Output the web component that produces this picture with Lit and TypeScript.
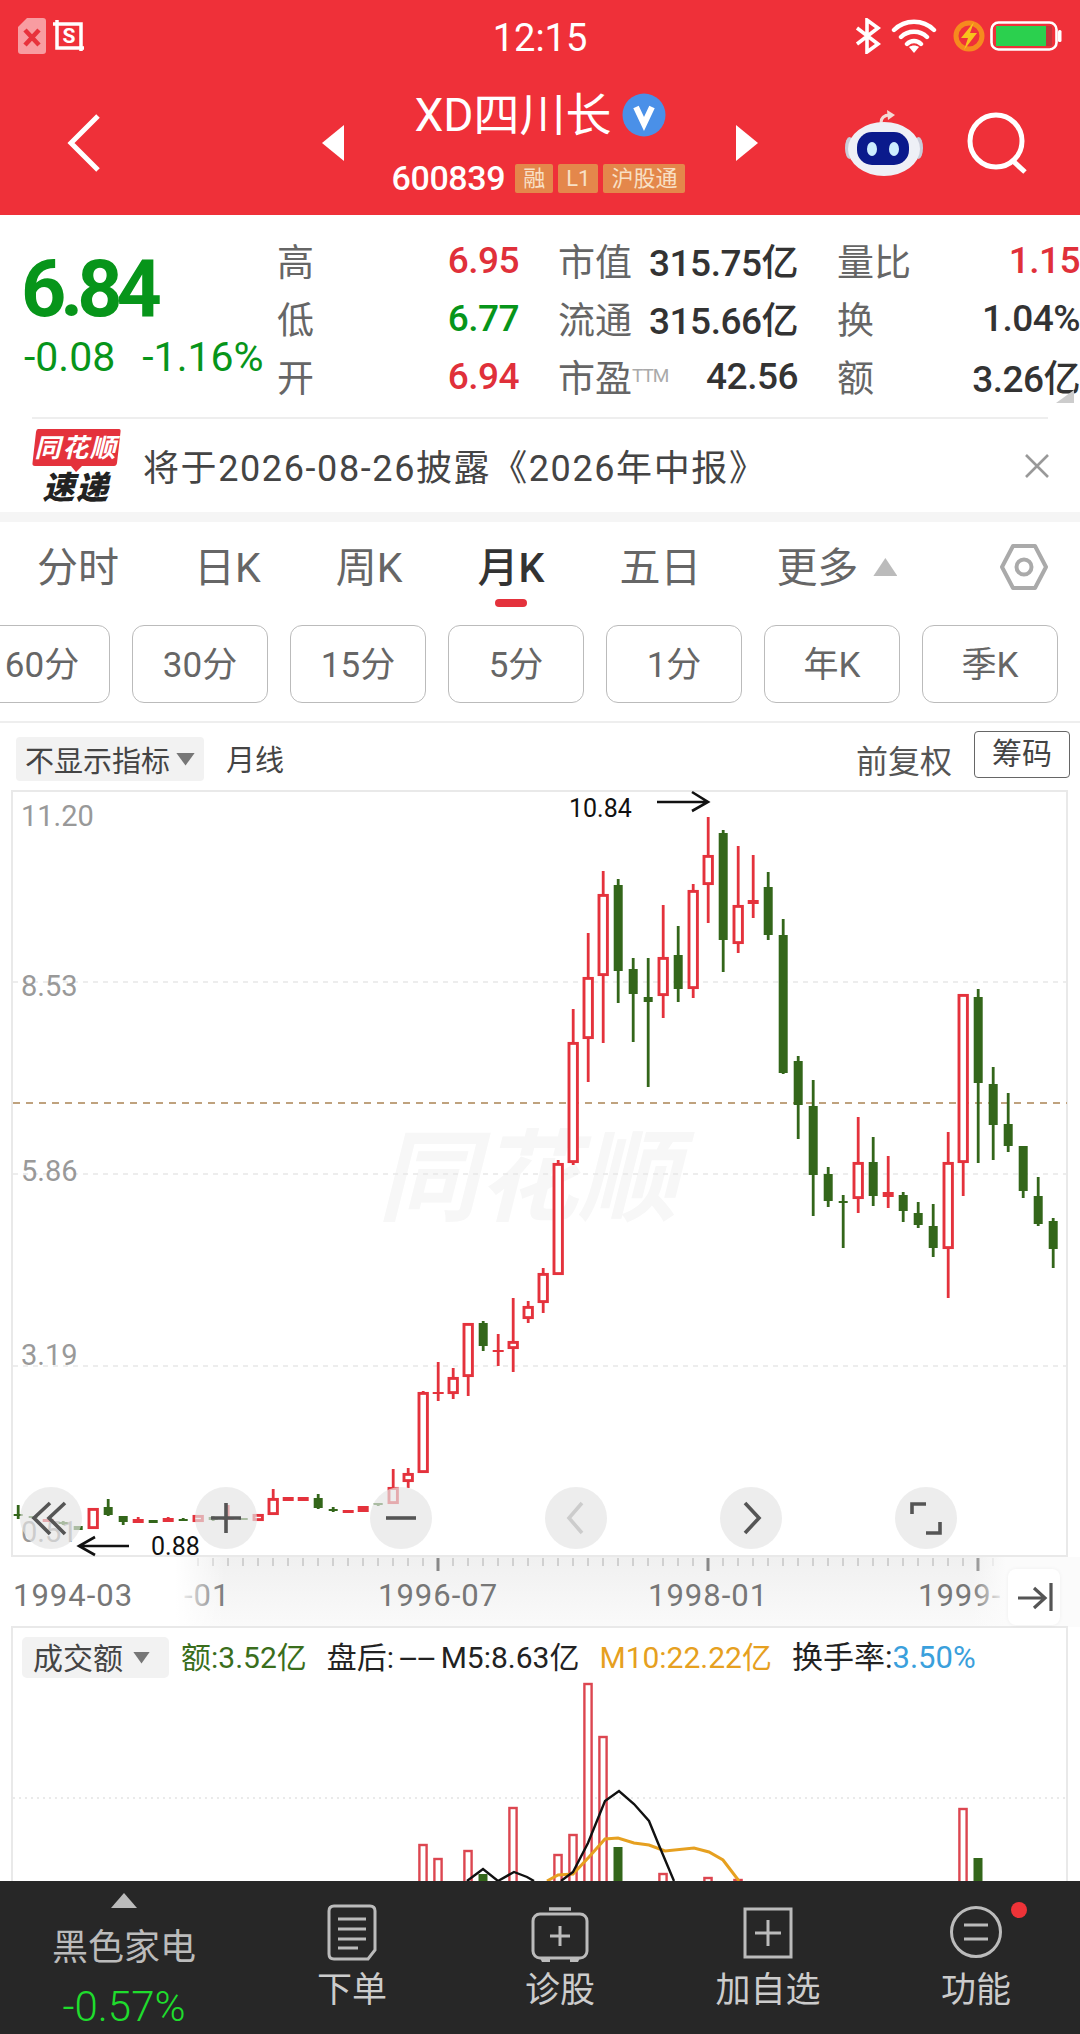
import { LitElement, css, html, svg } from "lit";
import { customElement } from "lit/decorators.js";

// [up, high, bodyTop, bodyBottom, low]
type Candle = [number, number, number, number, number];

const CANDLES: Candle[] = [
  [0, 1505, 1514, 1516, 1519], [0, 1516, 1516, 1518, 1519], [1, 1519, 1519, 1522, 1522], [0, 1521, 1522, 1524, 1525],
  [0, 1526, 1526, 1530, 1530], [1, 1508, 1508, 1529, 1529], [0, 1499, 1507, 1515, 1516], [0, 1516, 1516, 1522, 1525],
  [1, 1517, 1519, 1523, 1523], [0, 1520, 1520, 1523, 1523], [1, 1517, 1518, 1522, 1522], [0, 1518, 1519, 1521, 1521],
  [1, 1515, 1515, 1522, 1522], [0, 1516, 1517, 1520, 1521], [1, 1505, 1517, 1520, 1520], [0, 1518, 1518, 1520, 1520],
  [1, 1514, 1514, 1521, 1521], [1, 1489, 1498, 1515, 1515], [1, 1497, 1497, 1501, 1501], [1, 1497, 1497, 1501, 1501],
  [0, 1494, 1498, 1508, 1509], [0, 1507, 1509, 1511, 1512], [1, 1510, 1510, 1513, 1513], [1, 1506, 1506, 1512, 1512],
  [0, 1503, 1503, 1505, 1506], [1, 1469, 1487, 1504, 1504], [1, 1468, 1473, 1482, 1488], [1, 1391, 1392, 1473, 1473],
  [1, 1362, 1392, 1394, 1401], [1, 1368, 1377, 1394, 1399], [1, 1323, 1323, 1377, 1396], [0, 1321, 1323, 1346, 1351],
  [1, 1334, 1350, 1352, 1366], [1, 1298, 1341, 1349, 1372], [1, 1301, 1306, 1319, 1323], [1, 1268, 1273, 1303, 1313],
  [1, 1160, 1163, 1275, 1275], [1, 1009, 1042, 1163, 1165], [1, 933, 977, 1039, 1082], [1, 871, 894, 976, 1043],
  [0, 879, 885, 971, 1003], [0, 958, 969, 994, 1042], [0, 958, 997, 1002, 1087], [1, 905, 957, 996, 1018],
  [0, 926, 955, 989, 1002], [1, 884, 890, 989, 998], [1, 817, 855, 885, 923], [0, 830, 833, 940, 972],
  [1, 846, 905, 944, 953], [1, 855, 900, 904, 918], [0, 872, 887, 935, 940], [0, 919, 935, 1073, 1074],
  [0, 1056, 1061, 1105, 1139], [0, 1080, 1106, 1175, 1216], [0, 1167, 1174, 1201, 1207], [0, 1195, 1201, 1203, 1248],
  [1, 1117, 1162, 1199, 1213], [0, 1137, 1162, 1196, 1206], [1, 1156, 1192, 1197, 1208], [0, 1192, 1195, 1211, 1222],
  [0, 1202, 1213, 1225, 1228], [0, 1204, 1226, 1248, 1257], [1, 1132, 1162, 1249, 1298], [1, 994, 994, 1163, 1196],
  [0, 989, 997, 1083, 1163], [0, 1067, 1084, 1125, 1160], [0, 1093, 1124, 1146, 1152], [0, 1146, 1146, 1191, 1198],
  [0, 1177, 1196, 1224, 1226], [0, 1218, 1221, 1249, 1268],
];

// [up, x, top]
const VOLUMES: [number, number, number][] = [
  [1, 423, 1844], [1, 438, 1858], [1, 468, 1850], [0, 483, 1874], [1, 513, 1807], [1, 558, 1854], [1, 573, 1834],
  [1, 588, 1683], [1, 603, 1736], [0, 618, 1847], [1, 663, 1873], [1, 708, 1877], [1, 738, 1879], [1, 963, 1808],
  [0, 978, 1858],
];

const MA5_A = "467,1881 483,1869 498,1881 514,1872 527,1877 534,1881";
const MA5_B = "561,1881 573,1872 588,1843 605,1801 619,1791 634,1804 649,1821 658,1843 674,1881";
const MA10 = "547,1881 558,1875 573,1874 589,1857 605,1839 618,1838 634,1843 649,1845 665,1851 694,1848 709,1852 723,1860 739,1881";

const CHIPS = ["60分", "30分", "15分", "5分", "1分", "年K", "季K"];
const TABS = ["分时", "日K", "周K", "月K", "五日", "更多"];
const AXIS_X = Array.from({ length: 55 }, (_, i) => 198 + i * 15);

const candleX = (i: number) => 18.2 + i * 15;

function renderCandle(c: Candle, i: number) {
  const [up, high, top, bottom, low] = c;
  const x = candleX(i);
  const color = up ? "#e4323c" : "#33661a";
  const thin = bottom - top < 7;
  const wick = svg`<line x1=${x} x2=${x} y1=${high} y2=${low} stroke=${color} stroke-width="2.8"></line>`;
  if (!up || thin) {
    const w = up ? 11 : 9;
    return svg`${wick}<rect x=${x - w / 2} y=${top} width=${w} height=${bottom - top} fill=${color}></rect>`;
  }
  return svg`${wick}<rect x=${x - 4.2} y=${top + 1.4} width="8.4" height=${bottom - top - 2.8} fill="#fff" stroke=${color} stroke-width="2.9"></rect>`;
}

function renderVolume(v: [number, number, number]) {
  const [up, x, top] = v;
  return up
    ? svg`<rect x=${x - 3.6} y=${top + 1} width="7.2" height=${1890 - top} fill="#fff" stroke="#dc4650" stroke-width="2.4"></rect>`
    : svg`<rect x=${x - 4.5} y=${top} width="9" height=${1890 - top} fill="#33661a"></rect>`;
}

@customElement("app-root")
export class AppRoot extends LitElement {
  static styles = css`
    :host {
      display: block;
      height: 100vh;
      font-family: Roboto, "Noto Sans CJK SC", sans-serif;
      color: #333;
      background: #fff;
      overflow: hidden;
    }
    .page {
      display: flex;
      flex-direction: column;
      height: 100%;
    }
    .top {
      height: 215px;
      flex: none;
      background: #ef3039;
      color: #fff;
      display: flex;
      flex-direction: column;
    }
    .status {
      height: 56px;
      display: grid;
      grid-template-columns: 1fr auto 1fr;
      align-items: center;
      padding: 14px 18px 0;
      box-sizing: border-box;
    }
    .status-left {
      display: flex;
      gap: 7px;
      align-items: center;
    }
    .status-right {
      display: flex;
      gap: 5px;
      align-items: center;
      justify-content: flex-end;
    }
    .status-right .wifi {
      margin: 0 11px 0 4px;
    }
    .time {
      font-size: 38px;
      line-height: 40px;
      margin-top: 4px;
    }
    .nav {
      flex: 1;
      display: grid;
      grid-template-columns: 1fr 436px 1fr;
      align-items: center;
      padding-top: 14px;
    }
    .back {
      padding-left: 66px;
      display: flex;
    }
    .centre {
      display: flex;
      justify-content: space-between;
      align-items: center;
    }
    .stock {
      display: flex;
      flex-direction: column;
      align-items: center;
    }
    .title {
      display: flex;
      align-items: center;
      gap: 10px;
      font-size: 46px;
      line-height: 52px;
    }
    .code-row {
      display: flex;
      align-items: center;
      margin: 19px 0 0 2px;
    }
    .code {
      font-size: 34px;
      line-height: 36px;
      font-weight: 500;
      letter-spacing: -0.4px;
      margin-right: 10px;
    }
    .tag {
      height: 29px;
      line-height: 29px;
      padding: 0 8px;
      margin-right: 5px;
      border-radius: 2px;
      background: #e4874b;
      color: #f8e0c6;
      font-size: 22px;
    }
    .nav-right {
      display: flex;
      align-items: center;
      justify-content: flex-end;
      gap: 44px;
      padding-right: 51px;
    }
    .quote {
      position: relative;
      flex: none;
      height: 202px;
      box-sizing: border-box;
      padding: 16px 0 0 23px;
      display: grid;
      grid-template-columns: 254px 242px 240px 241px;
      grid-template-rows: 58px 58px 58px;
    }
    .quote::after {
      content: "";
      position: absolute;
      right: 6px;
      top: 175px;
      width: 18px;
      height: 13px;
      background: #ccc;
      clip-path: polygon(100% 0, 100% 100%, 0 100%);
    }
    .price {
      grid-row: 1 / span 3;
      color: #07951a;
    }
    .price-main {
      font-size: 79px;
      line-height: 80px;
      font-weight: 700;
      letter-spacing: -6px;
      margin: 18px 0 0 -2px;
    }
    .price-sub {
      display: flex;
      gap: 27px;
      font-size: 41px;
      line-height: 44px;
      margin: 6px 0 0 1px;
      white-space: nowrap;
    }
    .cell {
      display: flex;
      justify-content: space-between;
      align-items: center;
      font-size: 37px;
      white-space: nowrap;
      font-weight: 500;
      letter-spacing: -0.5px;
    }
    .cell.c2 {
      margin-left: 39px;
      width: 240px;
    }
    .cell.c3 {
      margin-left: 78px;
      width: 243px;
    }
    .cell .label {
      color: #666;
      font-weight: 400;
      font-size: 37px;
      letter-spacing: 0;
    }
    .cell sup {
      font-size: 19px;
      color: #aaa;
      font-weight: 400;
      vertical-align: 10px;
      line-height: 0;
      letter-spacing: -1px;
    }
    .red {
      color: #e0303a;
    }
    .green {
      color: #07951a;
    }
    .news {
      flex: none;
      height: 95px;
      margin: 0 32px;
      border-top: 2px solid #eee;
      box-sizing: border-box;
      display: flex;
      align-items: center;
      font-size: 36px;
      letter-spacing: 1.6px;
      color: #444;
    }
    .news-text {
      margin: -2px 0 0 22px;
      white-space: nowrap;
    }
    .news-close {
      margin: 0 -2px 0 auto;
      display: flex;
    }
    .band {
      flex: none;
      height: 10px;
      background: #f5f5f5;
    }
    .tabs {
      flex: none;
      height: 90px;
      display: flex;
      align-items: center;
      gap: 75px;
      padding: 0 32px 0 37px;
      font-size: 41px;
      color: #666;
    }
    .tab {
      position: relative;
      height: 90px;
      line-height: 92px;
      white-space: nowrap;
    }
    .tab.active {
      color: #333;
      font-weight: 500;
    }
    .tab.active::after {
      content: "";
      position: absolute;
      left: 50%;
      bottom: 5px;
      width: 32px;
      height: 8px;
      margin-left: -16px;
      border-radius: 4px;
      background: #e4323c;
    }
    .more-caret {
      margin-left: -60px;
      width: 24px;
      height: 18px;
      background: #bbb;
      clip-path: polygon(50% 0, 100% 100%, 0 100%);
    }
    .hex {
      margin-left: auto;
      display: flex;
    }
    .chips {
      flex: none;
      display: flex;
      gap: 22px;
      margin: 13px 0 0 -26px;
      padding-bottom: 18px;
      border-bottom: 2px solid #eee;
      width: 1106px;
    }
    .chip {
      flex: none;
      box-sizing: border-box;
      width: 136px;
      height: 78px;
      line-height: 80px;
      text-align: center;
      border: 1px solid #bbb;
      border-radius: 12px;
      font-size: 35px;
      color: #666;
    }
    .indicator {
      flex: none;
      height: 67px;
      display: flex;
      align-items: center;
      padding: 0 10px 0 16px;
      font-size: 29px;
      color: #444;
    }
    .select {
      display: flex;
      align-items: center;
      gap: 6px;
      height: 44px;
      padding: 0 9px;
      margin-top: 5px;
      background: #f2f2f2;
      border-radius: 4px;
      color: #444;
    }
    .caret {
      width: 19px;
      height: 13px;
      background: #777;
      clip-path: polygon(0 0, 100% 0, 50% 100%);
    }
    .line-type {
      margin-left: 22px;
      margin-top: 2px;
    }
    .adjust {
      margin-left: auto;
      color: #555;
      font-size: 32px;
      margin-top: 4px;
    }
    .chips-btn {
      margin-left: 22px;
      box-sizing: border-box;
      width: 96px;
      height: 47px;
      line-height: 43px;
      text-align: center;
      border: 1px solid #666;
      border-radius: 4px;
      margin-bottom: 4px;
      font-size: 30px;
    }
    .chart {
      position: relative;
      flex: 1;
      min-height: 0;
      overflow: hidden;
    }
    .chart > svg {
      display: block;
    }
    .axis-label {
      font-size: 31px;
      fill: #777;
      letter-spacing: 1px;
    }
    .price-label {
      font-size: 29px;
      fill: #999;
    }
    .note {
      font-size: 25px;
      fill: #111;
    }
    .watermark {
      font-size: 100px;
      font-weight: 700;
      font-style: italic;
      fill: #f7f7f7;
    }
    .tools {
      position: absolute;
      left: 20px;
      top: 697px;
      display: flex;
      gap: 113px;
    }
    .tool {
      width: 62px;
      height: 62px;
      border-radius: 50%;
      background: rgba(228, 228, 228, 0.68);
    }
    .jump {
      position: absolute;
      left: 1008px;
      top: 779px;
      width: 52px;
      height: 56px;
      border-radius: 8px;
      background: #fff;
      box-shadow: 0 0 4px rgba(0, 0, 0, 0.05);
    }
    .vol-row {
      position: absolute;
      left: 22px;
      top: 847px;
      display: flex;
      align-items: center;
      font-size: 30px;
      white-space: nowrap;
      color: #222;
    }
    .vol-select {
      display: flex;
      align-items: center;
      gap: 10px;
      box-sizing: border-box;
      width: 147px;
      height: 41px;
      padding: 0 0 3px 11px;
      background: #f2f2f2;
      border-radius: 5px;
      color: #444;
      margin-right: 12px;
    }
    .vol-select .caret {
      width: 17px;
      height: 12px;
      margin-top: 3px;
    }
    .vol-row > span {
      margin-top: -6px;
    }
    .vol-row > span + span {
      margin-left: 20px;
    }
    .vol-row > span.wide {
      font-size: 31px;
    }
    .dashes {
      display: inline-block;
      transform: scaleX(2.2);
      margin: 0 15px;
    }
    .vol-green {
      color: #3a6e1c;
    }
    .vol-orange {
      color: #e6a020;
    }
    .vol-blue {
      color: #3aa0dc;
    }
    .footer {
      flex: none;
      height: 153px;
      background: #272727;
      display: grid;
      grid-template-columns: 248px repeat(4, 208px);
      color: #ccc;
    }
    .sector {
      display: flex;
      flex-direction: column;
      align-items: center;
      padding-top: 12px;
    }
    .sector-up {
      width: 26px;
      height: 15px;
      background: #bbb;
      clip-path: polygon(50% 0, 100% 100%, 0 100%);
    }
    .sector-name {
      font-size: 36px;
      line-height: 44px;
      color: #bbb;
      margin-top: 18px;
    }
    .sector-pct {
      font-size: 42px;
      line-height: 44px;
      font-weight: 300;
      color: #1fdd2d;
      margin-top: 15px;
    }
    .action {
      position: relative;
      display: flex;
      flex-direction: column;
      align-items: center;
      padding-top: 22px;
      font-size: 35px;
      line-height: 40px;
    }
    .action span {
      margin-top: 8px;
    }
    .dot {
      position: absolute;
      left: 139px;
      top: 21px;
      width: 16px;
      height: 16px;
      border-radius: 50%;
      background: #ee3338;
    }
  `;

  private renderStatus() {
    return html`
      <div class="status">
        <div class="status-left">
          <svg width="28" height="36" viewBox="0 0 28 36">
            <path d="M9 0H25a3 3 0 0 1 3 3V33a3 3 0 0 1-3 3H3a3 3 0 0 1-3-3V9Z" fill="#f89ca1"></path>
            <path d="M7 12 21 27M21 12 7 27" stroke="#e8323c" stroke-width="4.5"></path>
          </svg>
          <svg width="32" height="32" viewBox="0 0 32 32">
            <path d="M4 0V28H31M0 4H28V31" fill="none" stroke="#fff" stroke-width="3.5"></path>
            <text x="16" y="23" text-anchor="middle" font-size="21" font-weight="700" fill="#fff">S</text>
          </svg>
        </div>
        <div class="time">12:15</div>
        <div class="status-right">
          <svg width="28" height="36" viewBox="0 0 28 36">
            <path d="M3 10 24 26 13 34V2L24 10 3 26" fill="none" stroke="#fff" stroke-width="3.6"></path>
          </svg>
          <svg class="wifi" width="46" height="34" viewBox="0 0 46 34">
            <path d="M3 11C14 0 32 0 43 11M10 18C17 11 29 11 36 18M16 25C20 21 26 21 30 25" fill="none" stroke="#fff" stroke-width="4.4" stroke-linecap="round"></path>
            <path d="M18 28C21 26 25 26 28 28L23 34Z" fill="#fff"></path>
          </svg>
          <svg width="32" height="32" viewBox="0 0 32 32">
            <circle cx="16" cy="16" r="13" fill="none" stroke="#f68a1e" stroke-width="5"></circle>
            <path d="M21 2 8 18H15L11 30 24 13H17Z" fill="#f8c21c"></path>
          </svg>
          <svg width="72" height="30" viewBox="0 0 72 30">
            <rect x="1.5" y="1.5" width="65" height="27" rx="7" fill="none" stroke="#fff" stroke-width="2.6"></rect>
            <rect x="6" y="5" width="56" height="20" fill="#c2353b"></rect>
            <rect x="6" y="5" width="50" height="20" fill="#2bd04e"></rect>
            <rect x="68" y="9" width="3.5" height="12" rx="1.5" fill="#fff"></rect>
          </svg>
        </div>
      </div>
    `;
  }

  private renderNav() {
    return html`
      <div class="nav">
        <div class="back">
          <svg width="36" height="60" viewBox="0 0 36 60">
            <path d="M32 3 5 30 32 57" fill="none" stroke="#fff" stroke-width="5"></path>
          </svg>
        </div>
        <div class="centre">
          <svg width="22" height="36" viewBox="0 0 22 36"><path d="M22 0V36L0 18Z" fill="#fff"></path></svg>
          <div class="stock">
            <div class="title">
              XD四川长
              <svg width="44" height="44" viewBox="0 0 44 44">
                <circle cx="22" cy="22" r="21.5" fill="#4a90e8"></circle>
                <path d="M14 14 22 31 30 14" fill="none" stroke="#fff" stroke-width="6"></path>
              </svg>
            </div>
            <div class="code-row">
              <div class="code">600839</div>
              <div class="tag">融</div>
              <div class="tag">L1</div>
              <div class="tag">沪股通</div>
            </div>
          </div>
          <svg width="22" height="36" viewBox="0 0 22 36"><path d="M0 0V36L22 18Z" fill="#fff"></path></svg>
        </div>
        <div class="nav-right">
          <svg width="78" height="66" viewBox="0 0 78 66">
            <path d="M36 13C36 6 41 5 45 5" fill="none" stroke="#f3d9d4" stroke-width="3"></path>
            <path d="M42 0 50 5 43 10Z" fill="#f3d9d4"></path>
            <ellipse cx="4.5" cy="38" rx="4.5" ry="11" fill="#c9ccd8"></ellipse>
            <ellipse cx="73.5" cy="38" rx="4.5" ry="11" fill="#c9ccd8"></ellipse>
            <ellipse cx="39" cy="39" rx="36" ry="27" fill="#eef0f6"></ellipse>
            <rect x="12" y="22" width="52" height="33" rx="15" fill="#0a1a8c"></rect>
            <ellipse cx="27" cy="39" rx="5" ry="7" fill="#cdeeff"></ellipse>
            <ellipse cx="49" cy="39" rx="5" ry="7" fill="#cdeeff"></ellipse>
          </svg>
          <svg width="62" height="62" viewBox="0 0 62 62">
            <circle cx="29" cy="29" r="26" fill="none" stroke="#fff" stroke-width="5"></circle>
            <path d="M46 49 58 60" stroke="#fff" stroke-width="5"></path>
          </svg>
        </div>
      </div>
    `;
  }

  private renderQuote() {
    return html`
      <div class="quote">
        <div class="price">
          <div class="price-main">6.84</div>
          <div class="price-sub"><span>-0.08</span><span>-1.16%</span></div>
        </div>
        <div class="cell"><span class="label">高</span><span class="red">6.95</span></div>
        <div class="cell c2"><span class="label">市值</span><span>315.75亿</span></div>
        <div class="cell c3"><span class="label">量比</span><span class="red">1.15</span></div>
        <div class="cell"><span class="label">低</span><span class="green">6.77</span></div>
        <div class="cell c2"><span class="label">流通</span><span>315.66亿</span></div>
        <div class="cell c3"><span class="label">换</span><span>1.04%</span></div>
        <div class="cell"><span class="label">开</span><span class="red">6.94</span></div>
        <div class="cell c2"><span class="label">市盈<sup>TTM</sup></span><span>42.56</span></div>
        <div class="cell c3"><span class="label">额</span><span>3.26亿</span></div>
      </div>
      <div class="news">
        <svg width="89" height="74" viewBox="0 0 89 74">
          <path d="M6 0H87Q89 0 88.500 3L85 34Q84.500 37 82 37H50L44 43 39 37H3Q0 37 .5 34L4 3Q4.500 0 6 0Z" fill="#e4323c"></path>
          <text x="44" y="28" text-anchor="middle" font-size="26" font-weight="700" font-style="italic" fill="#fff">同花顺</text>
          <text x="44" y="70" text-anchor="middle" font-size="32" font-weight="900" font-style="italic" fill="#222">速递</text>
        </svg>
        <div class="news-text">将于2026-08-26披露《2026年中报》</div>
        <div class="news-close">
          <svg width="26" height="26" viewBox="0 0 26 26">
            <path d="M2 2 24 24M24 2 2 24" stroke="#999" stroke-width="2.6"></path>
          </svg>
        </div>
      </div>
      <div class="band"></div>
    `;
  }

  private renderPeriods() {
    return html`
      <div class="tabs">
        ${TABS.map((t) => html`<div class="tab ${t === "月K" ? "active" : ""}">${t}</div>`)}
        <div class="more-caret"></div>
        <div class="hex">
          <svg width="48" height="46" viewBox="0 0 48 46">
            <path d="M13 2H35L46 23 35 44H13L2 23Z" fill="none" stroke="#aaa" stroke-width="4" stroke-linejoin="round"></path>
            <circle cx="24" cy="23" r="7.500" fill="none" stroke="#aaa" stroke-width="4"></circle>
          </svg>
        </div>
      </div>
      <div class="chips">${CHIPS.map((c) => html`<div class="chip">${c}</div>`)}</div>
      <div class="indicator">
        <div class="select">不显示指标<span class="caret"></span></div>
        <div class="line-type">月线</div>
        <div class="adjust">前复权</div>
        <div class="chips-btn">筹码</div>
      </div>
    `;
  }

  private renderCanvas() {
    return html`
      <svg width="1080" height="1091" viewBox="0 790 1080 1091">
        <defs>
          <linearGradient id="axisBg" x1="0" y1="0" x2="0" y2="1">
            <stop offset="0" stop-color="#f0f0f0"></stop>
            <stop offset="1" stop-color="#fafafa"></stop>
          </linearGradient>
          <linearGradient id="fadeLeft" x1="0" y1="0" x2="1" y2="0">
            <stop offset="0.78" stop-color="#fff"></stop>
            <stop offset="1" stop-color="#fff" stop-opacity="0"></stop>
          </linearGradient>
          <linearGradient id="fadeRight" x1="0" y1="0" x2="1" y2="0">
            <stop offset="0" stop-color="#fbfbfb" stop-opacity="0"></stop>
            <stop offset="1" stop-color="#fbfbfb"></stop>
          </linearGradient>
        </defs>

        <text class="watermark" x="378" y="1213">同花顺</text>

        <rect x="12" y="791" width="1055" height="765" fill="none" stroke="#e9e9e9" stroke-width="2"></rect>
        ${[982, 1174, 1366].map(
          (y) => svg`<line x1="13" x2="1066" y1=${y} y2=${y} stroke="#e8e8e8" stroke-width="1.500" stroke-dasharray="5 5"></line>`
        )}
        <line x1="13" x2="1067" y1="1103" y2="1103" stroke="#bfa27e" stroke-width="2" stroke-dasharray="7 6"></line>

        <text class="price-label" x="21" y="826">11.20</text>
        <text class="price-label" x="21" y="996">8.53</text>
        <text class="price-label" x="21" y="1181">5.86</text>
        <text class="price-label" x="21" y="1365">3.19</text>
        <text class="price-label" x="21" y="1542">0.51</text>

        ${CANDLES.map(renderCandle)}

        <text class="note" x="569" y="817">10.84</text>
        <path d="M657 802H708M692 792 708 802 692 811" fill="none" stroke="#111" stroke-width="2.600"></path>
        <text class="note" x="151" y="1555">0.88</text>
        <path d="M129 1546H79M95 1537 79 1546 95 1555" fill="none" stroke="#111" stroke-width="2.600"></path>

        <rect x="0" y="1557" width="1080" height="70" fill="url(#axisBg)"></rect>
        ${AXIS_X.map((x) => {
          const major = x === 438 || x === 708 || x === 978;
          return svg`<line x1=${x} x2=${x} y1="1558" y2=${major ? 1571 : 1566} stroke=${major ? "#888" : "#bbb"} stroke-width=${major ? 3 : 1.2}></line>`;
        })}
        <text class="axis-label" x="184" y="1606">-01</text>
        <text class="axis-label" x="378" y="1606">1996-07</text>
        <text class="axis-label" x="648" y="1606">1998-01</text>
        <text class="axis-label" x="918" y="1606">1999-</text>
        <rect x="0" y="1557" width="225" height="70" fill="url(#fadeLeft)"></rect>
        <rect x="972" y="1557" width="34" height="70" fill="url(#fadeRight)"></rect>
        <rect x="1006" y="1557" width="74" height="70" fill="#fbfbfb"></rect>
        <text class="axis-label" x="13" y="1606">1994-03</text>

        <path d="M12 1881V1627H1067V1881" fill="none" stroke="#e9e9e9" stroke-width="2"></path>
        <line x1="13" x2="1066" y1="1798" y2="1798" stroke="#e4e4e4" stroke-width="1.500" stroke-dasharray="2 4"></line>
        ${VOLUMES.map(renderVolume)}
        <polyline points=${MA10} fill="none" stroke="#e6a020" stroke-width="3"></polyline>
        <polyline points=${MA5_A} fill="none" stroke="#111" stroke-width="2.400"></polyline>
        <polyline points=${MA5_B} fill="none" stroke="#111" stroke-width="2.400"></polyline>
      </svg>
    `;
  }

  private renderTools() {
    return html`
      <div class="tools">
        <div class="tool">
          <svg width="62" height="62" viewBox="0 0 62 62">
            <path d="M30 16 14 31 30 47M45 16 29 31 45 47" fill="none" stroke="#555" stroke-width="3.600"></path>
          </svg>
        </div>
        <div class="tool">
          <svg width="62" height="62" viewBox="0 0 62 62">
            <path d="M16 31H46M31 16V46" fill="none" stroke="#555" stroke-width="3.600"></path>
          </svg>
        </div>
        <div class="tool">
          <svg width="62" height="62" viewBox="0 0 62 62"><path d="M16 31H46" stroke="#555" stroke-width="3.600"></path></svg>
        </div>
        <div class="tool">
          <svg width="62" height="62" viewBox="0 0 62 62">
            <path d="M37 16 24 31 37 46" fill="none" stroke="#ccc" stroke-width="3.600"></path>
          </svg>
        </div>
        <div class="tool">
          <svg width="62" height="62" viewBox="0 0 62 62">
            <path d="M25 16 39 31 25 46" fill="none" stroke="#555" stroke-width="3.600"></path>
          </svg>
        </div>
        <div class="tool">
          <svg width="62" height="62" viewBox="0 0 62 62">
            <path d="M17 27V17H31M45 35V46H31" fill="none" stroke="#555" stroke-width="3.600"></path>
          </svg>
        </div>
      </div>
      <div class="jump">
        <svg width="52" height="56" viewBox="0 0 52 56">
          <path d="M10 29H36M26 19 37 29 26 39M43 14V42" fill="none" stroke="#555" stroke-width="3.200"></path>
        </svg>
      </div>
      <div class="vol-row">
        <div class="vol-select">成交额<span class="caret"></span></div>
        <span class="vol-green">额:3.52亿</span>
        <span>盘后:<span class="dashes">--</span>M5:8.63亿</span>
        <span class="vol-orange">M10:22.22亿</span>
        <span class="wide">换手率:<span class="vol-blue">3.50%</span></span>
      </div>
    `;
  }

  private renderFooter() {
    return html`
      <div class="footer">
        <div class="sector">
          <div class="sector-up"></div>
          <div class="sector-name">黑色家电</div>
          <div class="sector-pct">-0.57%</div>
        </div>
        <div class="action">
          <svg width="64" height="60" viewBox="0 0 64 60">
            <path d="M14 3H50Q55 3 55 8V47L48 56H14Q9 56 9 51V8Q9 3 14 3Z" fill="none" stroke="#bbb" stroke-width="3"></path>
            <path d="M18 16H46M18 26H46M18 36H46M18 45H38" stroke="#bbb" stroke-width="3"></path>
          </svg>
          <span>下单</span>
        </div>
        <div class="action">
          <svg width="64" height="60" viewBox="0 0 64 60">
            <path d="M21 6H43" stroke="#bbb" stroke-width="3.500"></path>
            <rect x="5" y="11" width="54" height="44" rx="7" fill="none" stroke="#bbb" stroke-width="3"></rect>
            <path d="M22 33H42M32 23V43" stroke="#bbb" stroke-width="3"></path>
            <path d="M12 55H22V59H14ZM42 55H52L50 59H42Z" fill="#bbb"></path>
          </svg>
          <span>诊股</span>
        </div>
        <div class="action">
          <svg width="64" height="60" viewBox="0 0 64 60">
            <rect x="9" y="6" width="46" height="48" fill="none" stroke="#bbb" stroke-width="3"></rect>
            <path d="M19 30H45M32 17V43" stroke="#bbb" stroke-width="3"></path>
          </svg>
          <span>加自选</span>
        </div>
        <div class="action">
          <svg width="64" height="60" viewBox="0 0 64 60">
            <circle cx="32" cy="29" r="24.500" fill="none" stroke="#bbb" stroke-width="3"></circle>
            <path d="M20 22H44M20 36H44" stroke="#bbb" stroke-width="3"></path>
          </svg>
          <span>功能</span>
          <div class="dot"></div>
        </div>
      </div>
    `;
  }

  render() {
    return html`
      <div class="page">
        <div class="top">${this.renderStatus()} ${this.renderNav()}</div>
        ${this.renderQuote()} ${this.renderPeriods()}
        <div class="chart">${this.renderCanvas()} ${this.renderTools()}</div>
        ${this.renderFooter()}
      </div>
    `;
  }
}
